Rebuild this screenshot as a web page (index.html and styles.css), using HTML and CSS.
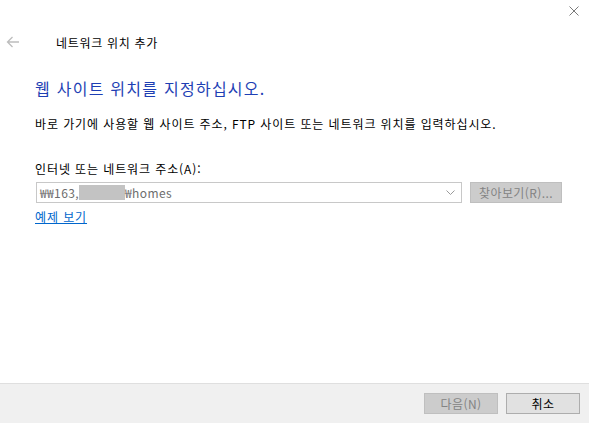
FILE: index.html
```html
<!DOCTYPE html>
<html lang="ko">
<head>
    <meta charset="UTF-8">
    <title>네트워크 위치 추가</title>
    <link rel="stylesheet" href="styles.css">
</head>
<body>
    <div class="dialog">
        <div class="titlebar">
            <span class="close">
                <svg width="10" height="10" viewBox="0 0 10 10"><path d="M0.5 0.5 L9.5 9.5 M9.5 0.5 L0.5 9.5" stroke="#7a7a7a" stroke-width="1" fill="none"/></svg>
            </span>
        </div>
        <div class="nav">
            <span class="back">
                <svg width="14" height="12" viewBox="0 0 14 12"><path d="M13 6 H1.5 M6.5 1 L1.5 6 L6.5 11" stroke="#bdbdbd" stroke-width="1.3" fill="none"/></svg>
            </span>
            <span class="wizard-title">네트워크 위치 추가</span>
        </div>

        <div class="content">
            <h1 class="heading">웹 사이트 위치를 지정하십시오.</h1>
            <p class="desc">바로 가기에 사용할 웹 사이트 주소, FTP 사이트 또는 네트워크 위치를 입력하십시오.</p>

            <label class="field-label">인터넷 또는 네트워크 주소(A):</label>
            <div class="field-row">
                <div class="combo">
                    <span class="combo-text">₩₩163,<span class="redact"></span>₩homes</span>
                    <svg class="chevron" width="9" height="5" viewBox="0 0 9 5"><path d="M0.5 0.5 L4.5 4.5 L8.5 0.5" stroke="#9a9a9a" stroke-width="1" fill="none"/></svg>
                </div>
                <span class="btn btn-disabled browse">찾아보기(R)...</span>
            </div>
            <a class="link" href="#">예제 보기</a>
        </div>

        <div class="footer">
            <span class="btn btn-disabled">다음(N)</span>
            <span class="btn">취소</span>
        </div>
    </div>
</body>
</html>
```

FILE: styles.css
```css
body{
  margin:0;
  background:#fff;
  font-family:"Noto Sans CJK KR","Noto Sans",sans-serif;
  font-size:12px;
  letter-spacing:0.9px;
  color:#000;
}

.dialog{
  width:589px;
  height:423px;
  display:flex;
  flex-direction:column;
}

.titlebar{
  height:22px;
  display:flex;
  justify-content:flex-end;
  align-items:flex-start;
}
.close{display:flex;padding:6px 10px 0 0;}

.nav{
  height:40px;
  display:flex;
  align-items:center;
}
.back{display:flex;margin-left:6px;width:50px;}
.wizard-title{font-size:12px;color:#000;letter-spacing:0.7px;}

.content{padding-left:35px;}

.heading{
  margin:15px 0 0 0;
  font-size:16px;
  font-weight:normal;
  color:#1e3fb4;
  line-height:22px;
  letter-spacing:1.25px;
}

.desc{
  margin:15px 0 0 0;
  line-height:20px;
}

.field-label{
  display:block;
  margin-top:26px;
  line-height:18px;
}

.field-row{
  display:flex;
  gap:8px;
  margin-top:4px;
}

.combo{
  height:19px;
  border:1px solid #c8c8c8;
  display:flex;
  align-items:center;
  justify-content:space-between;
  padding:0 6px 0 3px;
  margin-left:1px;
  width:415px;
}
.combo-text{color:#6d6d6d;display:flex;align-items:center;letter-spacing:0.4px;}
.redact{display:inline-block;width:46px;height:15px;background:#c3c3c3;}

.btn{
  width:72px;
  height:19px;
  border:1px solid #adadad;
  background:#e1e1e1;
  display:flex;
  align-items:center;
  justify-content:center;
  line-height:1;
  letter-spacing:0.4px;
}
.btn-disabled{
  background:#cccccc;
  border-color:#bfbfbf;
  color:#838383;
}
.browse{width:90px;}

.link{
  display:inline-block;
  margin-top:5px;
  color:#0066cc;
  text-decoration:underline;
  line-height:18px;
}

.footer{
  margin-top:auto;
  height:39px;
  background:#f0f0f0;
  border-top:1px solid #dfdfdf;
  display:flex;
  justify-content:flex-end;
  align-items:center;
  gap:8px;
  padding-right:9px;
}
```
